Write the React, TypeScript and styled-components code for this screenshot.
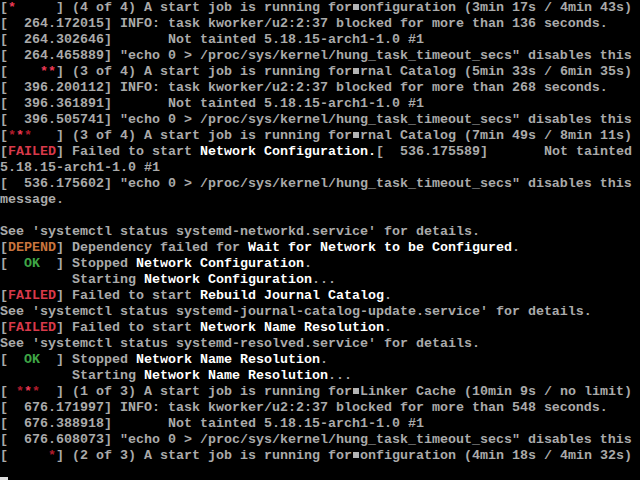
import React from "react";
import styled, { createGlobalStyle } from "styled-components";

const Global = createGlobalStyle`
  html, body { margin: 0; padding: 0; background: #000; }
`;

const Screen = styled.div`
  width: 640px;
  height: 480px;
  overflow: hidden;
  background: #000;
  color: #aaaaaa;
  font-family: "Liberation Mono", "DejaVu Sans Mono", monospace;
  font-size: 13.33px;
  font-weight: bold;
  display: flex;
  flex-direction: column;
`;

const Line = styled.div`
  height: 16px;
  line-height: 16px;
  white-space: pre;
  display: flex;
  align-items: flex-end;
`;

const Text = styled.span`
  display: block;
  height: 16px;
  line-height: 16px;
`;

const Hi = styled.span`
  color: #ffffff;
`;

type Tone = "fail" | "ok" | "dep";
const toneColor: Record<Tone, string> = {
  fail: "#d8394a",
  ok: "#3fa646",
  dep: "#c9743e",
};

const Status = styled.span<{ $tone: Tone }>`
  color: ${(p) => toneColor[p.$tone]};
`;

const Star = styled.span<{ $bright?: boolean }>`
  color: ${(p) => (p.$bright ? "#ec3a55" : "#b01c2c")};
`;

const Ell = styled.span`
  display: inline-block;
  width: 6px;
  height: 6px;
  margin: 0 1px;
  vertical-align: 1px;
  background: #b4b4b4;
`;

const Cursor = styled.span`
  display: inline-block;
  width: 8px;
  height: 3px;
  background: #dddddd;
`;

const S = {
  fail: <Status $tone="fail">FAILED</Status>,
  ok: <Status $tone="ok">  OK  </Status>,
  dep: <Status $tone="dep">DEPEND</Status>,
};

const echo = (ts: string) => (
  <Line>
    <Text>{`[  ${ts}] "echo 0 > /proc/sys/kernel/hung_task_timeout_secs" disables this`}</Text>
  </Line>
);
const info = (ts: string, secs: string) => (
  <Line>
    <Text>{`[  ${ts}] INFO: task kworker/u2:2:37 blocked for more than ${secs} seconds.`}</Text>
  </Line>
);
const taint = (ts: string) => (
  <Line>
    <Text>{`[  ${ts}]       Not tainted 5.18.15-arch1-1.0 #1`}</Text>
  </Line>
);

export default function App() {
  return (
    <>
      <Global />
      <Screen>
        <Line>
          <Text>
            [<Star $bright>*</Star>{"     ] (4 of 4) A start job is running for"}
            <Ell />
            {"onfiguration (3min 17s / 4min 43s)"}
          </Text>
        </Line>
        {info("264.172015", "136")}
        {taint("264.302646")}
        {echo("264.465889")}
        <Line>
          <Text>
            {"[    "}
            <Star $bright>*</Star>
            <Star $bright>*</Star>
            {"] (3 of 4) A start job is running for"}
            <Ell />
            {"rnal Catalog (5min 33s / 6min 35s)"}
          </Text>
        </Line>
        {info("396.200112", "268")}
        {taint("396.361891")}
        {echo("396.505741")}
        <Line>
          <Text>
            [<Star>*</Star>
            <Star $bright>*</Star>
            <Star>*</Star>
            {"   ] (3 of 4) A start job is running for"}
            <Ell />
            {"rnal Catalog (7min 49s / 8min 11s)"}
          </Text>
        </Line>
        <Line>
          <Text>
            [{S.fail}] Failed to start <Hi>Network Configuration.</Hi>
            {"[  536.175589]       Not tainted"}
          </Text>
        </Line>
        <Line>
          <Text>5.18.15-arch1-1.0 #1</Text>
        </Line>
        {echo("536.175602")}
        <Line>
          <Text>message.</Text>
        </Line>
        <Line />
        <Line>
          <Text>See 'systemctl status systemd-networkd.service' for details.</Text>
        </Line>
        <Line>
          <Text>
            [{S.dep}] Dependency failed for <Hi>Wait for Network to be Configured</Hi>.
          </Text>
        </Line>
        <Line>
          <Text>
            [{S.ok}] Stopped <Hi>Network Configuration</Hi>.
          </Text>
        </Line>
        <Line>
          <Text>
            {"         Starting "}
            <Hi>Network Configuration</Hi>...
          </Text>
        </Line>
        <Line>
          <Text>
            [{S.fail}] Failed to start <Hi>Rebuild Journal Catalog</Hi>.
          </Text>
        </Line>
        <Line>
          <Text>See 'systemctl status systemd-journal-catalog-update.service' for details.</Text>
        </Line>
        <Line>
          <Text>
            [{S.fail}] Failed to start <Hi>Network Name Resolution</Hi>.
          </Text>
        </Line>
        <Line>
          <Text>See 'systemctl status systemd-resolved.service' for details.</Text>
        </Line>
        <Line>
          <Text>
            [{S.ok}] Stopped <Hi>Network Name Resolution</Hi>.
          </Text>
        </Line>
        <Line>
          <Text>
            {"         Starting "}
            <Hi>Network Name Resolution</Hi>...
          </Text>
        </Line>
        <Line>
          <Text>
            {"[ "}
            <Star>*</Star>
            <Star $bright>*</Star>
            <Star>*</Star>
            {"  ] (1 of 3) A start job is running for"}
            <Ell />
            {"Linker Cache (10min 9s / no limit)"}
          </Text>
        </Line>
        {info("676.171997", "548")}
        {taint("676.388918")}
        {echo("676.608073")}
        <Line>
          <Text>
            {"[     "}
            <Star>*</Star>
            {"] (2 of 3) A start job is running for"}
            <Ell />
            {"onfiguration (4min 18s / 4min 32s)"}
          </Text>
        </Line>
        <Line>
          <Cursor />
        </Line>
      </Screen>
    </>
  );
}
